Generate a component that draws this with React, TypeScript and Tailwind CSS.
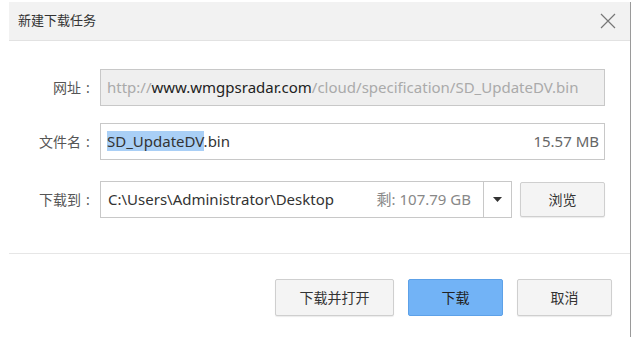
const font = "font-['Segoe_UI','Noto_Sans','Noto_Sans_CJK_SC',sans-serif]";

function Label({ text }: { text: string }) {
  return (
    <div className="w-[91px] shrink-0 text-right text-[14px] text-[#555] pr-[5px] whitespace-nowrap">
      {text}
      <span className="inline-block w-[14px] text-center">:</span>
    </div>
  );
}

export default function App() {
  return (
    <main className={`w-[637px] h-[346px] bg-white pt-[2px] ${font}`}>
      <div className="ml-[9px] w-[622px] h-[335px] border-r border-[#9a9a9a] flex flex-col">
        {/* Header */}
        <div className="h-[39px] bg-[#f2f2f2] border-b border-[#e2e2e2] flex items-center justify-between pl-[9px] pr-[14px]">
          <span className="text-[13px] text-[#333]">新建下载任务</span>
          <svg width="16" height="16" viewBox="0 0 16 16" className="text-[#777]">
            <path d="M1 1L15 15M15 1L1 15" stroke="currentColor" strokeWidth="1.2" fill="none" />
          </svg>
        </div>

        {/* Form */}
        <div className="pt-[28px] pr-[25px] flex flex-col">
          <div className="flex items-center h-[37px]">
            <Label text="网址" />
            <div className="flex-1 h-[37px] bg-[#efefef] border border-[#c8c8c8] flex items-center px-[6px] text-[15px] text-[#aaa] whitespace-nowrap overflow-hidden">
              http://<span className="text-[#222]">www.wmgpsradar.com</span>/cloud/specification/SD_UpdateDV.bin
            </div>
          </div>

          <div className="flex items-center h-[37px] mt-[17px]">
            <Label text="文件名" />
            <div className="flex-1 h-[37px] bg-white border border-[#c8c8c8] flex items-center justify-between pl-[6px] pr-[5px] text-[15px] whitespace-nowrap">
              <span className="text-[#333]">
                <span className="bg-[#a9cff6]">SD_UpdateDV</span>.bin
              </span>
              <span className="text-[#666]">15.57 MB</span>
            </div>
          </div>

          <div className="flex items-center h-[37px] mt-[21px]">
            <Label text="下载到" />
            <div className="w-[412px] h-[37px] bg-white border border-[#c8c8c8] flex items-center text-[15px] whitespace-nowrap">
              <div className="flex-1 flex items-center justify-between pl-[7px] pr-[12px]">
                <span className="text-[#333]">C:\Users\Administrator\Desktop</span>
                <span className="text-[#888]">剩: 107.79 GB</span>
              </div>
              <div className="w-[28px] h-full border-l border-[#c8c8c8] flex items-center justify-center">
                <svg width="9" height="5" viewBox="0 0 9 5">
                  <path d="M0 0H9L4.5 5Z" fill="#333" />
                </svg>
              </div>
            </div>
            <button className="ml-[8px] w-[85px] h-[35px] bg-[#f4f4f4] border border-[#cfcfcf] rounded-[2px] shadow-[0_1px_1px_rgba(0,0,0,0.08)] text-[14px] text-[#333]">
              浏览
            </button>
          </div>
        </div>

        {/* Footer */}
        <div className="mt-[35px] border-t border-[#e6e6e6] flex justify-end gap-[14px] pt-[25px] pr-[18px]">
          <button className="w-[119px] h-[37px] bg-[#f4f4f4] border border-[#cfcfcf] rounded-[2px] shadow-[0_1px_1px_rgba(0,0,0,0.08)] text-[14px] text-[#333]">
            下载并打开
          </button>
          <button className="w-[95px] h-[37px] bg-[#72b3f6] border border-[#5da1e8] rounded-[2px] text-[14px] text-[#222]">
            下载
          </button>
          <button className="w-[95px] h-[37px] bg-[#f4f4f4] border border-[#cfcfcf] rounded-[2px] shadow-[0_1px_1px_rgba(0,0,0,0.08)] text-[14px] text-[#333]">
            取消
          </button>
        </div>
      </div>
    </main>
  );
}
